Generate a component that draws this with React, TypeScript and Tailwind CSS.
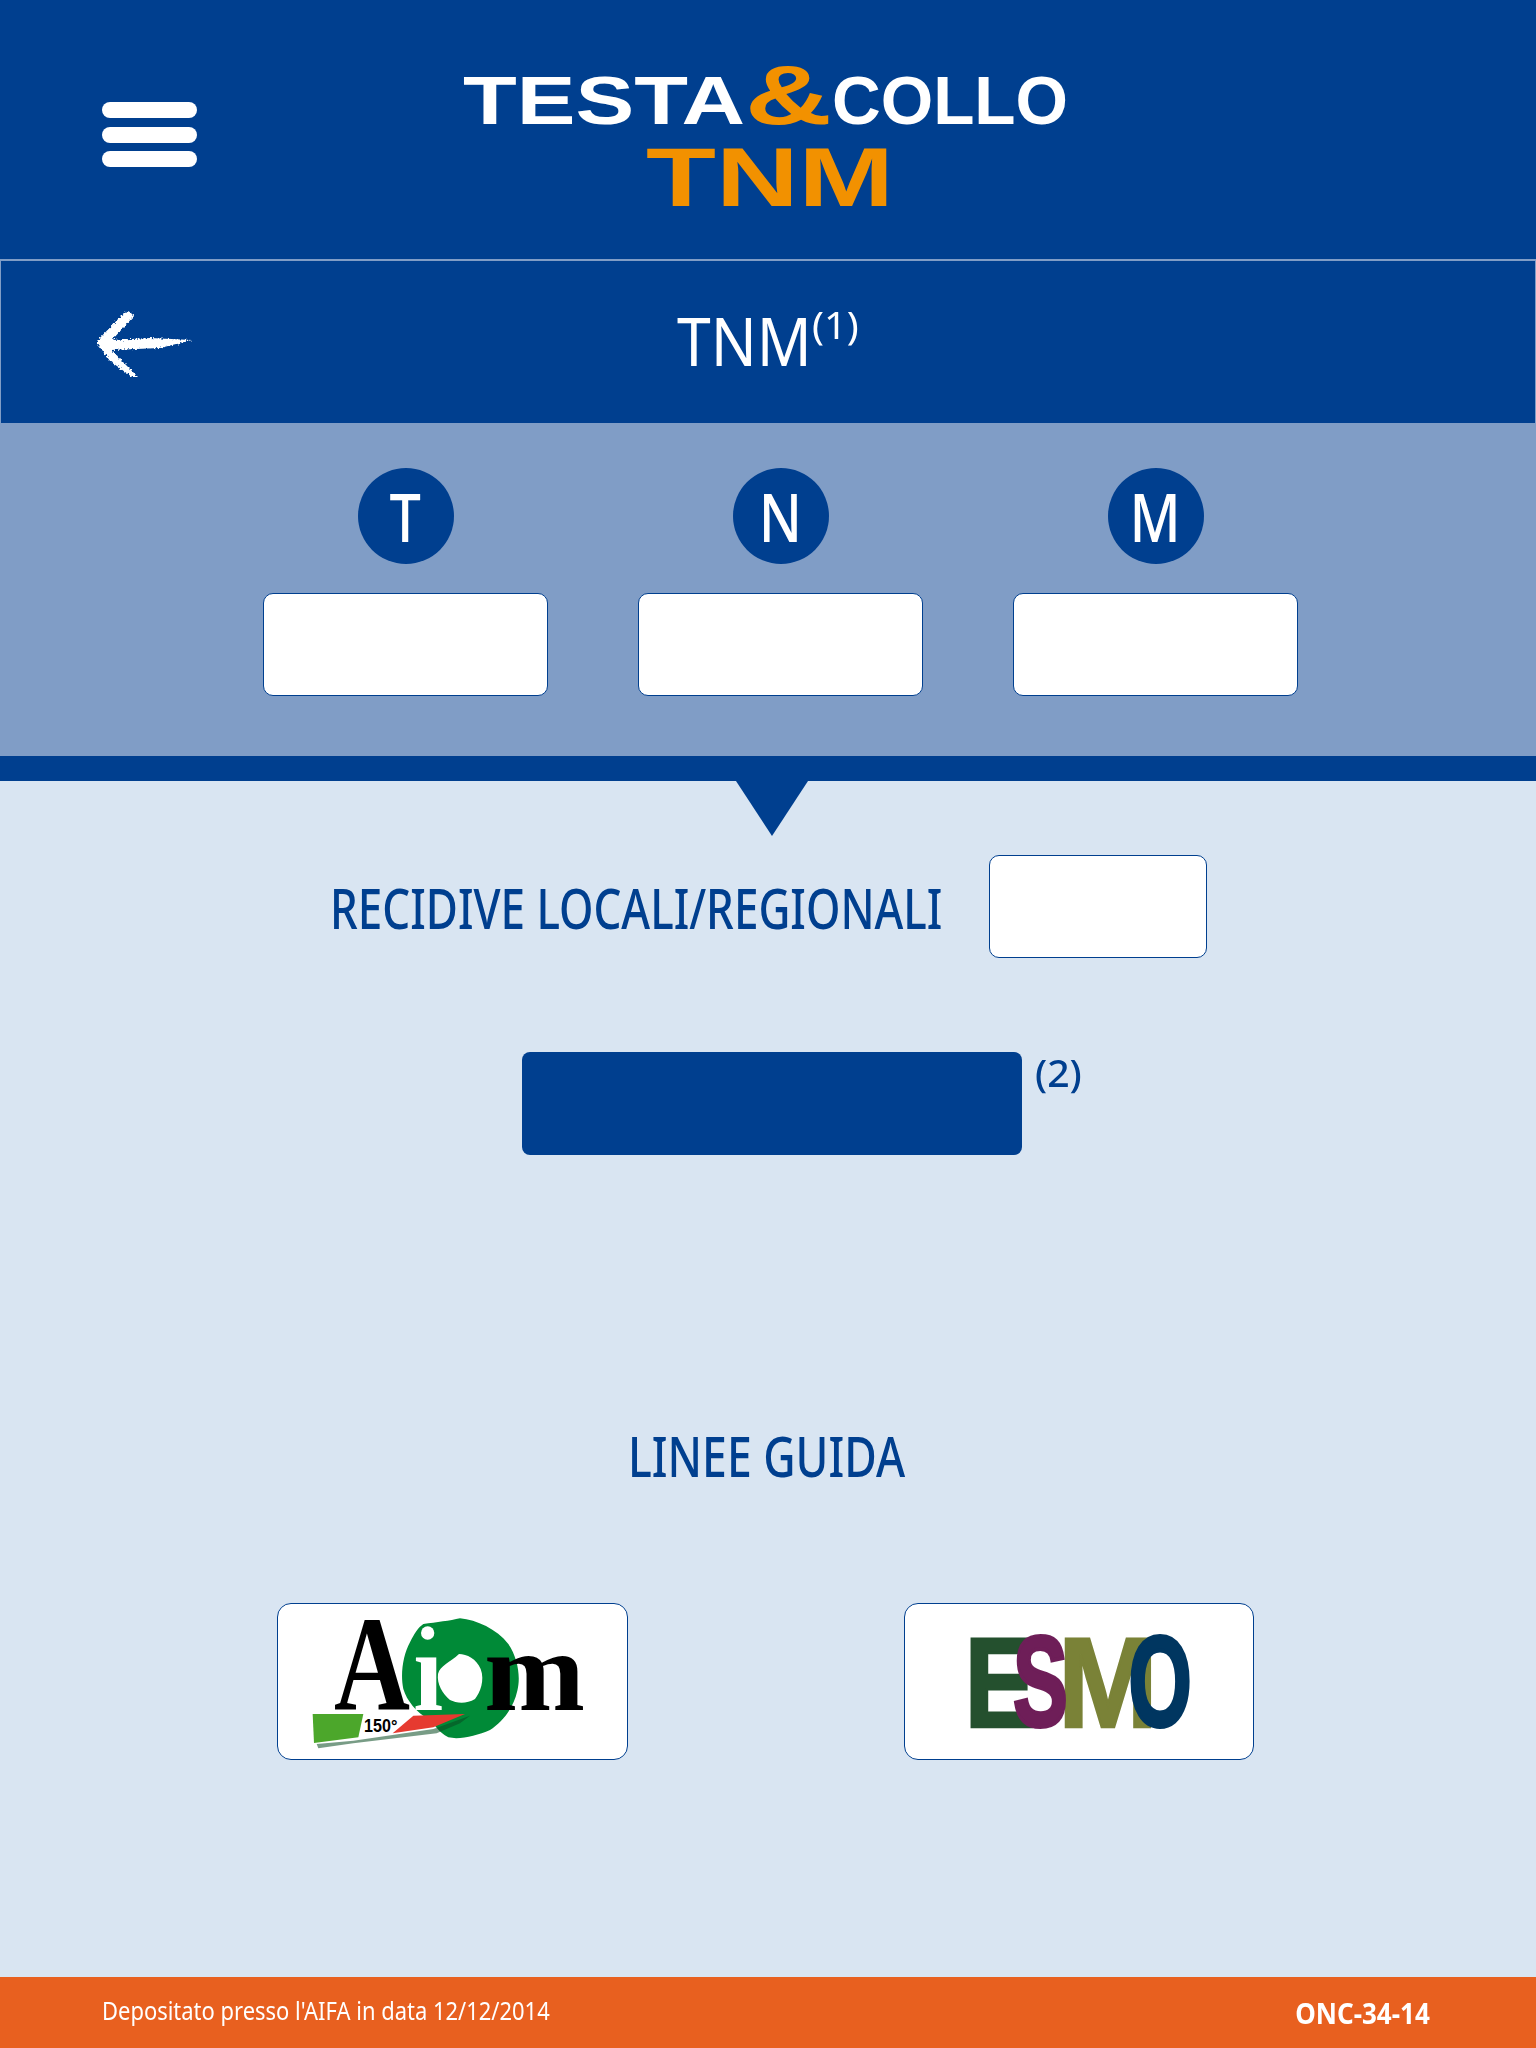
const noto = 'font-["Noto_Sans","Liberation_Sans",sans-serif]';

function Logo() {
  return (
    <svg width="605" height="142" viewBox="463 65 605 142" className="shrink-0 overflow-visible">
      <g fontFamily="'Liberation Sans', sans-serif" fontWeight="700">
        <text x="463" y="124" fontSize="68" textLength="282" lengthAdjust="spacingAndGlyphs" fill="#fff">TESTA</text>
        <text x="745" y="124" fontSize="84" textLength="87" lengthAdjust="spacingAndGlyphs" fill="#f29100">&amp;</text>
        <text x="832" y="124" fontSize="68" textLength="236" lengthAdjust="spacingAndGlyphs" fill="#fff">COLLO</text>
        <text x="646" y="206" fontSize="84" textLength="248" lengthAdjust="spacingAndGlyphs" fill="#f29100">TNM</text>
      </g>
    </svg>
  );
}

function Hamburger() {
  return (
    <div className="flex w-[95px] shrink-0 flex-col gap-[8.5px]">
      <div className="h-4 rounded-full bg-white" />
      <div className="h-4 rounded-full bg-white" />
      <div className="h-4 rounded-full bg-white" />
    </div>
  );
}

function ChalkArrow() {
  return (
    <svg width="104" height="72" viewBox="91 310 104 72" className="mt-[6px] shrink-0">
      <defs>
        <filter id="chalk" x="-10%" y="-10%" width="120%" height="120%">
          <feTurbulence type="fractalNoise" baseFrequency="0.5" numOctaves="2" seed="4" />
          <feDisplacementMap in="SourceGraphic" scale="6" xChannelSelector="R" yChannelSelector="G" />
        </filter>
      </defs>
      <polygon
        filter="url(#chalk)"
        fill="#fff"
        points="96,343 122,316 128,312 135,316 112,341 150,339 192,341 160,349 112,351 122,362 138,378 132,378 110,362"
      />
    </svg>
  );
}

function AiomLogo() {
  return (
    <svg width="349" height="154" viewBox="55 73 1045 462" className="overflow-visible">
      <path
        d="M490 130 C530 125 570 120 600 113 C650 118 710 145 745 190 C775 235 782 290 772 330 C760 385 725 425 690 448 C650 465 600 478 565 470 C535 455 525 430 505 415 C470 395 440 360 430 325 C420 280 430 220 450 185 C462 160 475 140 490 130Z"
        fill="#008a37"
      />
      <path
        d="M597 220 C620 220 650 235 662 265 C675 300 660 335 645 355 C620 370 590 368 570 358 C548 340 530 310 534 280 C540 255 570 245 597 220Z"
        fill="#fff"
      />
      <circle cx="503" cy="157" r="20" fill="#fff" />
      <g fontFamily="'Liberation Serif', serif" fontWeight="700">
        <text x="222" y="387" fontSize="405" textLength="228" lengthAdjust="spacingAndGlyphs" fill="#000">A</text>
        <text x="460" y="387" fontSize="340" textLength="90" lengthAdjust="spacingAndGlyphs" fill="#fff">ı</text>
        <text x="672" y="387" fontSize="340" textLength="303" lengthAdjust="spacingAndGlyphs" fill="#000">m</text>
      </g>
      <polygon points="170,490 280,480 520,445 630,405 600,428 530,458 280,488 175,503" fill="#0a4a22" fillOpacity="0.55" />
      <polygon points="300,405 460,405 398,458 280,470" fill="#fff" />
      <polygon points="158,400 310,400 295,470 162,487" fill="#4ca72b" />
      <polygon points="460,405 615,400 520,440 398,458" fill="#e63a30" />
      <text x="312" y="453" fontSize="56" fontWeight="700" textLength="100" lengthAdjust="spacingAndGlyphs" fontFamily="'Liberation Sans', sans-serif" fill="#000">150°</text>
    </svg>
  );
}

function EsmoLogo() {
  return (
    <svg width="348" height="154" viewBox="43 73 1046 462" className="overflow-visible">
      <g fontFamily="'Liberation Sans', sans-serif" fontWeight="700" fontSize="385">
        <text x="222" y="438" textLength="215" lengthAdjust="spacingAndGlyphs" fill="#24502e" stroke="#24502e" strokeWidth="8">E</text>
        <text x="503" y="438" textLength="300" lengthAdjust="spacingAndGlyphs" fill="#7a8237" stroke="#7a8237" strokeWidth="8">M</text>
        <text x="368" y="436" textLength="165" lengthAdjust="spacingAndGlyphs" fill="#6e1e58" stroke="#6e1e58" strokeWidth="12">S</text>
        <text x="715" y="436" textLength="190" lengthAdjust="spacingAndGlyphs" fill="#003660" stroke="#003660" strokeWidth="12">O</text>
      </g>
    </svg>
  );
}

function StageColumn({ letter }: { letter: string }) {
  return (
    <div className="flex w-[285px] flex-col items-center gap-[29px]">
      <div className="flex h-[96px] w-[96px] items-center justify-center rounded-full bg-[#003f8f] text-white">
        <span className="scale-x-[0.82] text-[68px] font-medium leading-none">{letter}</span>
      </div>
      <div className="h-[103px] w-[285px] rounded-[10px] border border-[#003f8f] bg-white" />
    </div>
  );
}

export default function App() {
  return (
    <div className={`flex h-[2048px] w-[1536px] flex-col overflow-hidden bg-[#d9e5f2] ${noto}`}>
      <header className="flex h-[259px] items-start bg-[#003f8f] pl-[102px]">
        <div className="mt-[102px]">
          <Hamburger />
        </div>
        <div className="ml-[266px] mt-[65px]">
          <Logo />
        </div>
      </header>

      <div className="flex h-[164px] items-center border-x border-t-2 border-[#809dc6] bg-[#003f8f] pl-[90px]">
        <ChalkArrow />
        <div className="-mt-[3px] ml-[482px] flex items-start text-white">
          <span className="w-[135px] origin-left scale-x-[0.905] whitespace-nowrap text-[67px] leading-none">TNM</span>
          <span className="-mt-[2px] w-[45px] origin-left scale-x-[1.05] whitespace-nowrap text-[38px] leading-none">(1)</span>
        </div>
      </div>

      <div className="flex h-[333px] gap-[90px] bg-[#809dc6] pl-[263px] pt-[45px]">
        <StageColumn letter="T" />
        <StageColumn letter="N" />
        <StageColumn letter="M" />
      </div>
      <div className="h-[25px] bg-[#003f8f]" />

      <main className="relative flex-1">
        <div className="absolute left-[736px] top-0 h-[55px] w-[72px] bg-[#003f8f] [clip-path:polygon(0_0,100%_0,50%_100%)]" />

        <div className="flex items-center pl-[330px] pt-[74px]">
          <h2 className="w-[659px] origin-left scale-x-[0.785] whitespace-nowrap text-[56px] font-medium leading-none text-[#003f8f]">RECIDIVE LOCALI/REGIONALI</h2>
          <div className="h-[103px] w-[218px] rounded-[10px] border border-[#003f8f] bg-white" />
        </div>

        <div className="flex items-start pl-[522px] pt-[94px]">
          <div className="h-[103px] w-[500px] rounded-[8px] bg-[#003f8f]" />
          <span className="ml-[13px] mt-[1px] origin-left scale-x-[1.03] text-[38px] font-medium leading-none text-[#003f8f]">(2)</span>
        </div>

        <h2 className="origin-left translate-x-[628px] scale-x-[0.795] whitespace-nowrap pt-[272px] text-[56px] font-medium leading-none text-[#003f8f]">LINEE GUIDA</h2>

        <div className="flex gap-[276px] pl-[277px] pt-[120px]">
          <div className="flex h-[157px] w-[351px] items-center justify-center rounded-[14px] border border-[#003f8f] bg-white">
            <AiomLogo />
          </div>
          <div className="flex h-[157px] w-[350px] items-center justify-center rounded-[14px] border border-[#003f8f] bg-white">
            <EsmoLogo />
          </div>
        </div>
      </main>

      <footer className="flex h-[71px] items-center justify-between bg-[#e8601f] pl-[102px] pr-[106px] text-white">
        <span className="-mt-[4px] origin-left scale-x-[0.878] whitespace-nowrap text-[25px] leading-none">Depositato presso l'AIFA in data 12/12/2014</span>
        <span className="origin-right scale-x-[0.93] whitespace-nowrap text-[28px] font-bold leading-none">ONC-34-14</span>
      </footer>
    </div>
  );
}
